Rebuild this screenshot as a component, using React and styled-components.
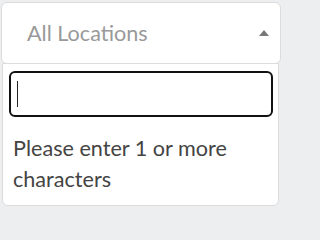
import styled, { createGlobalStyle } from 'styled-components';

const GlobalStyle = createGlobalStyle`
    * {
        box-sizing: border-box;
    }
    body {
        margin: 0;
        background: #eceef0;
        font-family: Lato, 'Noto Sans', sans-serif;
    }
`;

const Wrapper = styled.div`
    display: flex;
    flex-direction: column;
    padding: 2px 1px 0 1px;
    width: 282px;
    height: 207px;
`;

const SelectBox = styled.div`
    display: flex;
    align-items: center;
    justify-content: space-between;
    height: 62px;
    padding: 0 11px 0 25px;
    background: #fff;
    border: 1px solid #dcdcdc;
    border-radius: 6px;
`;

const Placeholder = styled.span`
    font-size: 21.6px;
    color: #999;
`;

const Arrow = styled.span`
    width: 0;
    height: 0;
    border-left: 5px solid transparent;
    border-right: 5px solid transparent;
    border-bottom: 6px solid #777;
`;

const Dropdown = styled.div`
    display: flex;
    flex-direction: column;
    margin: -1px 2px 0 1px;
    padding: 7px 5px 10px 6px;
    background: #fff;
    border: 1px solid #dcdcdc;
    border-radius: 0 0 6px 6px;
`;

const SearchField = styled.div`
    position: relative;
`;

const SearchInput = styled.input`
    display: block;
    width: 100%;
    height: 46px;
    padding: 0 6px;
    border: 2px solid #111;
    border-radius: 6px;
    outline: none;
    font: inherit;
    font-size: 20px;
    background: #fff;
`;

const Caret = styled.span`
    position: absolute;
    left: 8px;
    top: 10px;
    width: 1px;
    height: 26px;
    background: #222;
`;

const Message = styled.p`
    margin: 16px 0 0 4px;
    font-size: 21.6px;
    line-height: 31px;
    color: #444;
`;

const App = () => {
    return (
        <>
            <GlobalStyle />
            <Wrapper>
                <SelectBox>
                    <Placeholder>All Locations</Placeholder>
                    <Arrow />
                </SelectBox>
                <Dropdown>
                    <SearchField>
                        <SearchInput type="text" />
                        <Caret />
                    </SearchField>
                    <Message>Please enter 1 or more characters</Message>
                </Dropdown>
            </Wrapper>
        </>
    );
};

export default App;
